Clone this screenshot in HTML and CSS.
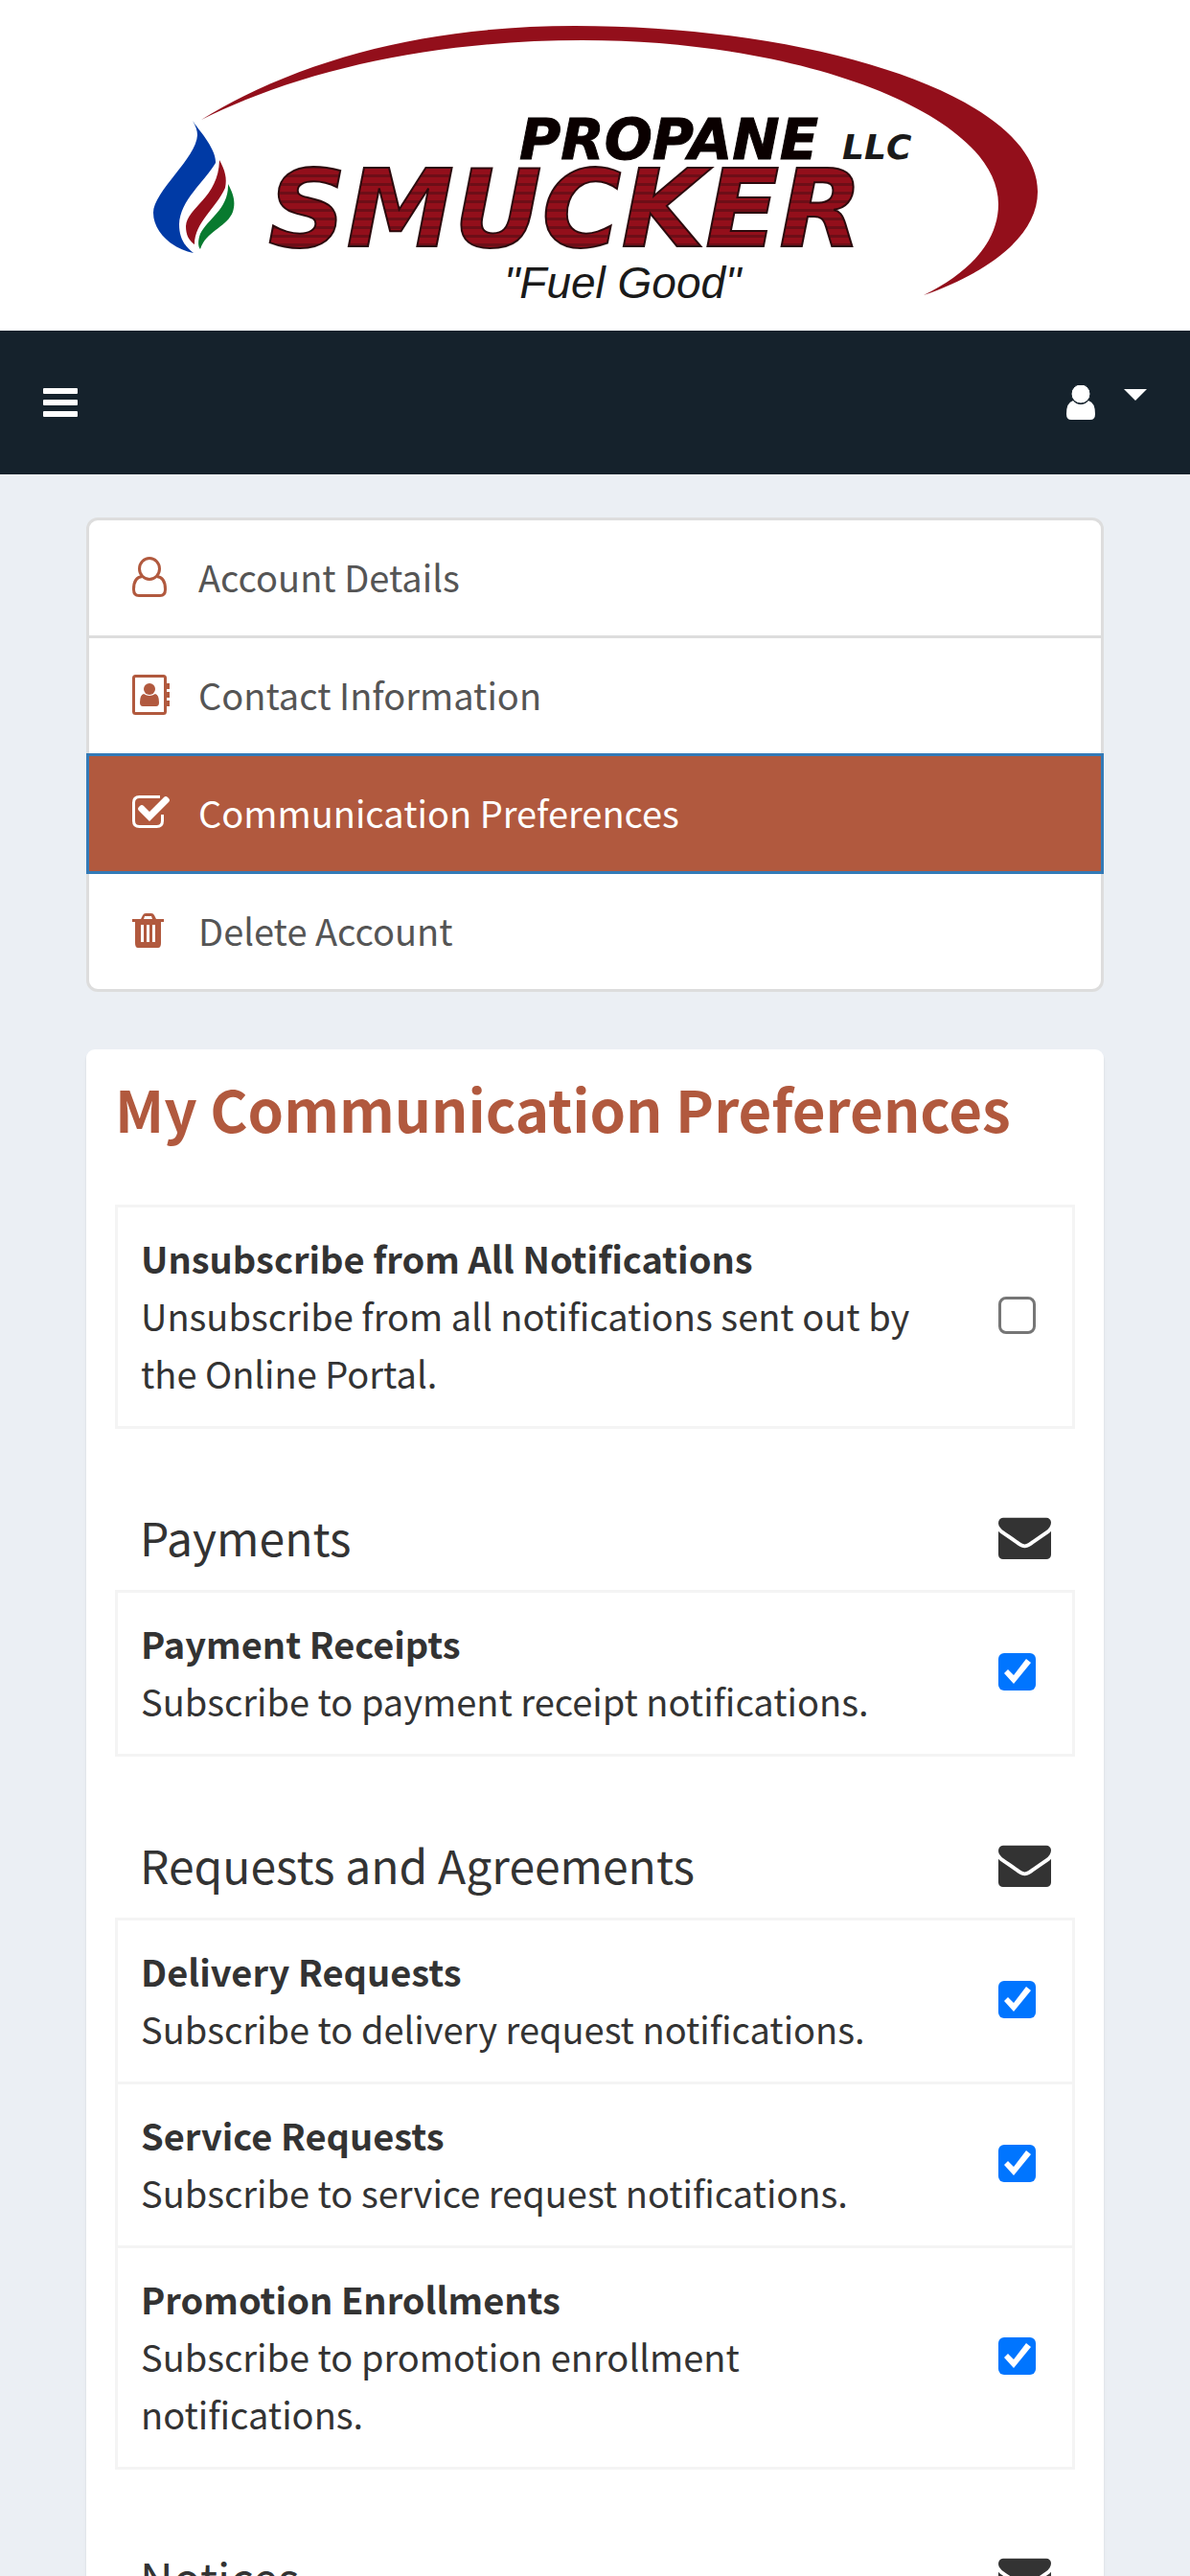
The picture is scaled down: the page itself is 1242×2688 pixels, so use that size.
FILE: index.html
```
<!DOCTYPE html>
<html lang="en">

<head>
    <meta charset="UTF-8">
    <meta name="viewport" content="width=device-width, initial-scale=1.0">
    <title>My Communication Preferences</title>
    <link rel="stylesheet" href="styles.css">
</head>

<body>
    <!-- shared icons -->
    <svg class="sprite" aria-hidden="true">
        <symbol id="icon-envelope" viewBox="0 0 1792 1792">
            <path d="M1792 710v794q0 66-47 113t-113 47h-1472q-66 0-113-47t-47-113v-794q44 49 101 87 362 246 497 345 57 42 92.500 65.500t94.500 48 110 24.500h2q51 0 110-24.500t94.500-48 92.500-65.500q170-123 498-345 57-39 100-87zm0-294q0 79-49 151t-122 123q-376 261-468 325-10 7-42.500 31t-54 38.500-52 32.500-57.500 27-50 9h-2q-23 0-50-9t-57.500-27-52-32.500-54-38.500-42.500-31q-91-64-262-182.500t-205-142.500q-62-42-117-115.500t-55-136.500q0-78 41.500-130t118.500-52h1472q65 0 112.500 47t47.500 113z"/>
        </symbol>
    </svg>

    <header class="logo">
        <svg viewBox="0 0 1242 345" role="img" aria-label="Smucker Propane LLC">
            <defs>
                <pattern id="stripes" width="9" height="9" patternUnits="userSpaceOnUse">
                    <rect width="9" height="9" fill="#930f1b"/>
                    <rect y="2" width="9" height="3" fill="#6d0e17"/>
                </pattern>
            </defs>
            <path fill="#930f1b" d="M210 125C315 60 450 27 600 27C850 27 1083 100 1083 200C1083 245 1035 283 964 308C1015 283 1042 250 1042 213C1042 120 840 42 608 42C460 42 320 70 210 125Z"/>
            <path fill="#003aa5" d="M201 126C206 134 226 155 225 170C213 190 188 209 187 234C187 249 193 257 202 264C181 260 160 243 160 222C160 200 205 165 206 141C206 136 204 131 201 126Z"/>
            <path fill="#930f1b" d="M229 167C235 178 237 186 235 196C226 217 203 232 203 255C197 251 194 245 194 236C195 216 228 207 229 167Z"/>
            <path fill="#087a2f" d="M238 192C244 203 246 211 243 221C237 237 215 241 209 260C206 257 207 249 209 244C217 228 239 218 238 192Z"/>
            <text class="logo-propane" x="542" y="166">PROPANE</text>
            <text class="logo-llc" x="879" y="166">LLC</text>
            <text class="logo-smucker" x="280" y="257">SMUCKER</text>
            <text class="logo-slogan" x="526" y="311">"Fuel Good"</text>
        </svg>
    </header>

    <nav class="navbar">
        <button class="nav-btn" type="button" aria-label="Toggle navigation">
            <svg class="bars" viewBox="0 0 36 30"><rect width="36" height="6" rx="1"/><rect y="12" width="36" height="6" rx="1"/><rect y="24" width="36" height="6" rx="1"/></svg>
        </button>
        <button class="nav-btn" type="button" aria-label="Account menu">
            <svg class="user" viewBox="0 0 30 36"><path d="M7 16Q10 20 15 20Q20 20 23 16Q30 18 30 30Q30 36 25 36H5Q0 36 0 30Q0 18 7 16Z"/><circle class="head" cx="15" cy="9" r="10"/></svg>
            <svg class="caret" viewBox="0 0 24 12"><path d="M0 0H24L12 12Z"/></svg>
        </button>
    </nav>

    <main class="content">
        <ul class="menu">
            <li><a href="#">
                <svg viewBox="0 0 42 42"><path class="line" d="M10.500 20.500C4 21 1.500 27 1.500 34Q1.500 40.500 7 40.500H29Q34.500 40.500 34.500 34C34.500 27 32 21 25.500 20.500"/><ellipse class="line" cx="18" cy="12.500" rx="10.500" ry="11"/></svg>
                Account Details</a></li>
            <li><a href="#">
                <svg viewBox="0 0 42 42"><rect class="line" x="1.500" y="1.500" width="33" height="39" rx="2"/><path d="M36 9h3v6h-3zM36 18h3v6h-3zM36 27h3v6h-3z"/><circle cx="18" cy="15" r="6"/><path d="M12 20Q18 24 24 20Q28 21 28 29Q28 33 25 33H11Q8 33 8 29Q8 21 12 20Z"/></svg>
                Contact Information</a></li>
            <li class="active"><a href="#">
                <svg viewBox="0 0 42 42"><path class="line" d="M29 4.500H7.500Q1.500 4.500 1.500 10.500V29.500Q1.500 35.500 7.500 35.500H25.500Q31.500 35.500 31.500 29.500V23"/><path d="M7 19Q5 17 7 15L8 14Q10 12 12 14L18 20L33 5Q35 3 37 5L38 6Q40 8 38 10L18 30Z"/></svg>
                Communication Preferences</a></li>
            <li><a href="#">
                <svg viewBox="0 0 42 42"><path fill-rule="evenodd" d="M0 9H9L11 5Q12 3 14 3H20Q22 3 23 5L25 9H33V12H30V34Q30 39 27 39H6Q3 39 3 34V12H0ZM12 9H21L20 6H13ZM9 15V33H12V15ZM15 15V33H18V15ZM21 15V33H24V15Z"/></svg>
                Delete Account</a></li>
        </ul>

        <section class="panel">
            <h1>My Communication Preferences</h1>

            <table class="prefs">
                <tbody>
                    <tr>
                        <td><label for="unsubscribe"><b>Unsubscribe from All Notifications</b>Unsubscribe from all notifications sent out by the Online Portal.</label></td>
                        <td class="check"><input type="checkbox" id="unsubscribe"></td>
                    </tr>
                </tbody>
            </table>

            <table class="prefs">
                <thead>
                    <tr>
                        <th>Payments</th>
                        <th class="check"><svg class="envelope"><use href="#icon-envelope"/></svg></th>
                    </tr>
                </thead>
                <tbody>
                    <tr>
                        <td><label for="receipts"><b>Payment Receipts</b>Subscribe to payment receipt notifications.</label></td>
                        <td class="check"><input type="checkbox" id="receipts" checked></td>
                    </tr>
                </tbody>
            </table>

            <table class="prefs">
                <thead>
                    <tr>
                        <th>Requests and Agreements</th>
                        <th class="check"><svg class="envelope"><use href="#icon-envelope"/></svg></th>
                    </tr>
                </thead>
                <tbody>
                    <tr>
                        <td><label for="delivery"><b>Delivery Requests</b>Subscribe to delivery request notifications.</label></td>
                        <td class="check"><input type="checkbox" id="delivery" checked></td>
                    </tr>
                    <tr>
                        <td><label for="service"><b>Service Requests</b>Subscribe to service request notifications.</label></td>
                        <td class="check"><input type="checkbox" id="service" checked></td>
                    </tr>
                    <tr>
                        <td><label for="promotion"><b>Promotion Enrollments</b>Subscribe to promotion enrollment notifications.</label></td>
                        <td class="check"><input type="checkbox" id="promotion" checked></td>
                    </tr>
                </tbody>
            </table>

            <table class="prefs">
                <thead>
                    <tr>
                        <th>Notices</th>
                        <th class="check"><svg class="envelope"><use href="#icon-envelope"/></svg></th>
                    </tr>
                </thead>
            </table>
        </section>
    </main>
</body>
</html>
```

FILE: styles.css
```
* {
    box-sizing: border-box;
}

body {
    margin: 0;
    background-color: #ebeff4;
    color: #333;
    /* the Latin letters of Noto Sans CJK are Source Sans */
    font-family: 'Noto Sans CJK JP', 'Source Sans Pro', sans-serif;
    font-size: 38px;
    line-height: 60px;
}

.sprite {
    display: none;
}

/* logo */
.logo {
    background-color: #fff;
}

.logo svg {
    display: block;
    width: 100%;
}

.logo text {
    font-family: 'DejaVu Sans', Verdana, sans-serif;
    font-style: italic;
    font-weight: bold;
}

.logo .logo-propane {
    font-size: 59px;
    fill: #0a0000;
    stroke: #0a0000;
    stroke-width: 1px;
}

.logo .logo-llc {
    font-size: 36px;
    fill: #1a1a1a;
}

.logo .logo-smucker {
    font-size: 113px;
    fill: url(#stripes);
    stroke: #2b0a0d;
    stroke-width: 2px;
}

.logo .logo-slogan {
    font-family: 'Liberation Sans', Arial, sans-serif;
    font-size: 46px;
    font-weight: normal;
    fill: #1a1a1a;
}

/* navbar */
.navbar {
    display: flex;
    justify-content: space-between;
    align-items: center;
    height: 150px;
    padding: 0 45px;
    background-color: #15222c;
}

.nav-btn {
    display: flex;
    align-items: center;
    gap: 30px;
    padding: 0;
    border: 0;
    background: none;
    fill: #fff;
    cursor: pointer;
}

.bars {
    width: 36px;
    height: 30px;
}

.user {
    width: 30px;
    height: 36px;
}

.user .head {
    stroke: #15222c;
    stroke-width: 1px;
}

.caret {
    width: 24px;
    height: 12px;
    margin-bottom: 16px;
}

.content {
    padding: 45px 90px;
}

/* account menu */
.menu {
    margin: 0 0 60px;
    padding: 0;
    list-style: none;
    background-color: #fff;
    border: 3px solid #ddd;
    border-radius: 12px;
}

.menu a {
    display: flex;
    align-items: center;
    gap: 27px;
    padding: 29px 45px 31px;
    color: #555;
    text-decoration: none;
}

.menu li + li {
    border-top: 3px solid #ddd;
}

.menu svg {
    width: 42px;
    height: 42px;
    fill: #b1593e;
}

.menu .line {
    fill: none;
    stroke: #b1593e;
    stroke-width: 3px;
}

/* the blue frame covers the borders of the list */
.menu .active {
    margin: 0 -3px -3px;
    border: 3px solid #337ab7;
    background-color: #b1593e;
    position: relative;
}

.menu .active a {
    color: #fff;
}

.menu .active svg {
    fill: #fff;
}

.menu .active .line {
    fill: none;
    stroke: #fff;
}

/* preferences */
.panel {
    padding: 30px;
    background-color: #fff;
    border-radius: 9px;
    box-shadow: 0 3px 3px rgba(0, 0, 0, 0.1);
}

h1 {
    margin: 0 0 70px;
    color: #b1593e;
    font-size: 60px;
    line-height: 62px;
}

.prefs {
    width: 100%;
    margin-bottom: 60px;
    border-collapse: separate;
    border-spacing: 0;
}

.prefs th,
.prefs td {
    padding: 23px 24px 25px;
    text-align: left;
    vertical-align: middle;
}

.prefs th {
    padding: 22px 26px 26px;
    font-size: 48px;
    font-weight: normal;
}

.prefs td {
    border-bottom: 3px solid #f4f4f4;
}

.prefs tbody tr:first-child td {
    border-top: 3px solid #f4f4f4;
}

.prefs td:first-child {
    border-left: 3px solid #f4f4f4;
}

.prefs td:last-child {
    border-right: 3px solid #f4f4f4;
}

.prefs .check {
    width: 104px;
    padding: 0 0 3px 24px;
}

.prefs b {
    display: block;
}

.envelope {
    display: block;
    width: 55px;
    height: 55px;
    fill: #333;
}

input[type="checkbox"] {
    display: block;
    appearance: none;
    width: 39px;
    height: 39px;
    margin: 0;
    border: 3px solid #767676;
    border-radius: 8px;
    background-color: #fff;
}

input[type="checkbox"]:checked {
    border: 0;
    border-radius: 6px;
    background-color: #0075ff;
}

input[type="checkbox"]:checked::before {
    content: '';
    display: block;
    width: 39px;
    height: 39px;
    background-color: #fff;
    clip-path: polygon(6px 21px, 10px 17px, 16px 23px, 29px 6px, 34px 10px, 16px 32px);
}
```
